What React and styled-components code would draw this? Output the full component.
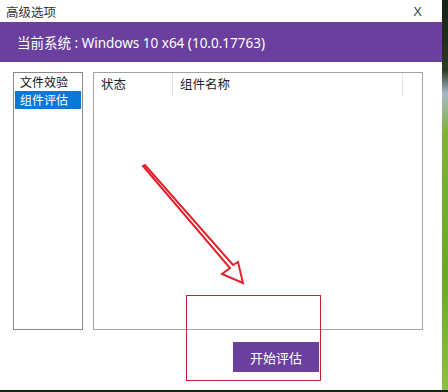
import React from 'react';
import styled, { createGlobalStyle } from 'styled-components';

const GlobalStyle = createGlobalStyle`
   html, body {
      margin: 0;
      padding: 0;
      width: 448px;
      height: 392px;
      overflow: hidden;
      background: #1b2419;
   }
   body {
      font-family: "Noto Sans", "Noto Sans CJK SC", sans-serif;
   }
`;

const Desktop = styled.div`
   display: flex;
   width: 448px;
   height: 390px;
`;

const DesktopEdge = styled.div`
   flex: 1;
   background: linear-gradient(180deg, #17201a 0%, #2a3a22 18%, #a8b8c8 24%, #7fb33a 34%, #6aa824 70%, #8cc040 100%);
`;

const Window = styled.div`
   position: relative;
   width: 442px;
   height: 390px;
   background: #ffffff;
   display: flex;
   flex-direction: column;
`;

const TitleBar = styled.div`
   height: 22px;
   display: flex;
   align-items: center;
   justify-content: space-between;
   padding: 0 20px 0 6px;
   font-family: "Noto Sans CJK SC", sans-serif;
   font-size: 12.5px;
   color: #333;
`;

const CloseGlyph = styled.span`
   font-family: "Liberation Sans", sans-serif;
   font-size: 13px;
   color: #444;
`;

const SystemBar = styled.div`
   height: 40px;
   background: #6a3f9e;
   color: #ffffff;
   display: flex;
   align-items: center;
   padding-left: 17px;
   font-size: 13.5px;
   font-family: "Noto Sans", "Noto Sans CJK SC", sans-serif;
`;

const Body = styled.div`
   display: flex;
   gap: 10px;
   padding: 10px 19px 0 13px;
   height: 258px;
`;

const ListBox = styled.div`
   width: 70px;
   box-sizing: border-box;
   border: 1px solid #8a8a8a;
   padding: 0 1px;
   display: flex;
   flex-direction: column;
`;

const ListItem = styled.div`
   height: 18px;
   line-height: 18px;
   padding-left: 5px;
   font-family: "Noto Sans CJK SC", sans-serif;
   font-size: 12px;
   color: ${(props) => (props.selected ? '#ffffff' : '#111')};
   background: ${(props) => (props.selected ? '#0a78d7' : 'transparent')};
`;

const TableBox = styled.div`
   flex: 1;
   box-sizing: border-box;
   border: 1px solid #a3a3a3;
`;

const HeaderRow = styled.div`
   display: grid;
   grid-template-columns: 79px 230px 1fr;
   height: 23px;
`;

const HeaderCell = styled.div`
   border-right: ${(props) => (props.last ? 'none' : '1px solid #e6e6e6')};
   padding-left: 7px;
   line-height: 22px;
   font-family: "Noto Sans CJK SC", sans-serif;
   font-size: 12.5px;
   color: #222;
`;

const Footer = styled.div`
   display: flex;
   padding: 12px 0 0 233px;
`;

const StartButton = styled.button`
   width: 86px;
   height: 30px;
   border: none;
   background: #6a3f9e;
   color: #ffffff;
   font-family: "Noto Sans CJK SC", sans-serif;
   font-size: 13px;
   padding: 0;
`;

const MarkBox = styled.div`
   position: absolute;
   left: 186px;
   top: 295px;
   width: 135px;
   height: 86px;
   box-sizing: border-box;
   border: 1px solid #c8202e;
   pointer-events: none;
`;

const ArrowLayer = styled.svg`
   position: absolute;
   left: 0;
   top: 0;
   pointer-events: none;
`;

const App = () => (
   <>
      <GlobalStyle />
      <Desktop>
         <Window>
            <TitleBar>
               <span>高级选项</span>
               <CloseGlyph>X</CloseGlyph>
            </TitleBar>
            <SystemBar>当前系统 : Windows 10 x64 (10.0.17763)</SystemBar>
            <Body>
               <ListBox>
                  <ListItem>文件效验</ListItem>
                  <ListItem selected>组件评估</ListItem>
               </ListBox>
               <TableBox>
                  <HeaderRow>
                     <HeaderCell>状态</HeaderCell>
                     <HeaderCell>组件名称</HeaderCell>
                     <HeaderCell last />
                  </HeaderRow>
               </TableBox>
            </Body>
            <Footer>
               <StartButton>开始评估</StartButton>
            </Footer>
            <MarkBox />
            <ArrowLayer width="442" height="390" viewBox="0 0 442 390">
               <path
                  d="M143 166 L230 268 L222 274 L243 283 L238 262 L233 265 L145 165 Z"
                  fill="none"
                  stroke="#e4202c"
                  strokeWidth="2"
                  strokeLinejoin="miter"
               />
            </ArrowLayer>
         </Window>
         <DesktopEdge />
      </Desktop>
   </>
);

export default App;
